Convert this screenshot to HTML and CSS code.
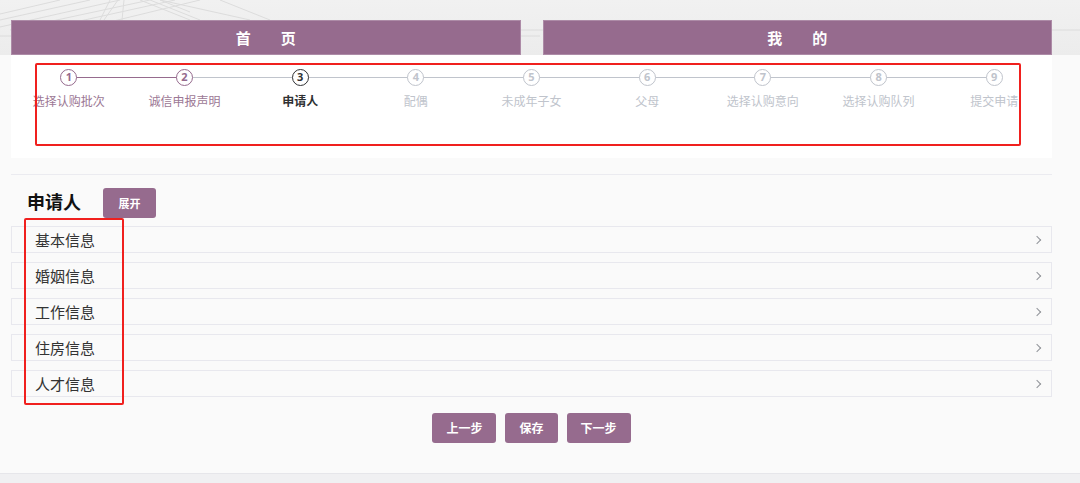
FILE: index.html
```html
<!DOCTYPE html>
<html lang="zh">
<head>
<meta charset="utf-8">
<link rel="stylesheet" href="styles.css">
</head>
<body>
<div class="page">
  <header class="hero">
    <svg class="hero-art" width="1080" height="55" viewBox="0 0 1080 55" aria-hidden="true">
      <g stroke="#dcdcdc" stroke-width="1" fill="none">
        <line x1="0" y1="14" x2="60" y2="0"/>
        <line x1="0" y1="20" x2="90" y2="0"/>
        <line x1="0" y1="27" x2="120" y2="0"/>
        <line x1="10" y1="30" x2="150" y2="0"/>
        <line x1="30" y1="32" x2="175" y2="0"/>
        <line x1="60" y1="34" x2="200" y2="0"/>
        <line x1="100" y1="20" x2="110" y2="0"/>
        <line x1="104" y1="20" x2="118" y2="0"/>
        <line x1="122" y1="20" x2="124" y2="0"/>
        <line x1="140" y1="0" x2="190" y2="20"/>
        <line x1="150" y1="0" x2="200" y2="20"/>
        <line x1="160" y1="0" x2="190" y2="12"/>
        <line x1="0" y1="36" x2="540" y2="36"/>
        <line x1="160" y1="0" x2="250" y2="20"/>
        <line x1="220" y1="0" x2="270" y2="20"/>
        <line x1="500" y1="30" x2="1080" y2="30"/>
      </g>
    </svg>
    <nav class="nav">
      <a class="nav-bar">首　　页</a>
      <a class="nav-bar">我　　的</a>
    </nav>
  </header>

  <div class="wrap">
    <div class="steps">
      <div class="step done"><div class="step-head"><span class="step-icon">1</span></div><div class="step-title">选择认购批次</div></div>
      <div class="step done"><div class="step-head"><span class="step-icon">2</span></div><div class="step-title">诚信申报声明</div></div>
      <div class="step current"><div class="step-head"><span class="step-icon">3</span></div><div class="step-title">申请人</div></div>
      <div class="step"><div class="step-head"><span class="step-icon">4</span></div><div class="step-title">配偶</div></div>
      <div class="step"><div class="step-head"><span class="step-icon">5</span></div><div class="step-title">未成年子女</div></div>
      <div class="step"><div class="step-head"><span class="step-icon">6</span></div><div class="step-title">父母</div></div>
      <div class="step"><div class="step-head"><span class="step-icon">7</span></div><div class="step-title">选择认购意向</div></div>
      <div class="step"><div class="step-head"><span class="step-icon">8</span></div><div class="step-title">选择认购队列</div></div>
      <div class="step last"><div class="step-head"><span class="step-icon">9</span></div><div class="step-title">提交申请</div></div>
      <div class="mark mark-steps"></div>
    </div>

    <div class="divider"></div>

    <section class="applicant">
      <div class="title-row">
        <h2 class="title">申请人</h2>
        <button class="btn btn-small">展开</button>
      </div>
      <div class="rows">
        <div class="row"><span>基本信息</span><i class="chev"></i></div>
        <div class="row"><span>婚姻信息</span><i class="chev"></i></div>
        <div class="row"><span>工作信息</span><i class="chev"></i></div>
        <div class="row"><span>住房信息</span><i class="chev"></i></div>
        <div class="row"><span>人才信息</span><i class="chev"></i></div>
        <div class="mark mark-rows"></div>
      </div>
      <div class="actions">
        <button class="btn">上一步</button>
        <button class="btn">保存</button>
        <button class="btn">下一步</button>
      </div>
    </section>
  </div>
  <footer class="foot"></footer>
</div>
</body>
</html>
```

FILE: styles.css
```css
* { box-sizing: border-box; }
html, body { margin: 0; padding: 0; }
body {
  background: #fafafa;
  font-family: "Noto Sans CJK SC", "Noto Sans", sans-serif;
  color: #303133;
  width: 1080px;
  height: 483px;
  overflow: hidden;
}
.page { position: relative; }

.hero {
  position: relative;
  height: 55px;
  background: linear-gradient(180deg, #f1f1f1 0%, #ececec 100%);
  padding: 20px 28px 0 11px;
}
.hero-art { position: absolute; left: 0; top: 0; }
.nav {
  position: relative;
  display: flex;
  gap: 22px;
  height: 35px;
}
.nav-bar {
  flex: 1;
  display: flex;
  align-items: center;
  justify-content: center;
  background: #966b8e;
  border: 1px solid #ad8ba7;
  color: #fff;
  font-weight: 700;
  font-size: 15px;
}

.wrap { margin-left: 11px; width: 1041px; }

.steps {
  position: relative;
  display: flex;
  background: #fff;
  height: 103px;
  padding-top: 14px;
}
.step { flex: 1; display: flex; flex-direction: column; align-items: center; }
.step-head {
  position: relative;
  width: 100%;
  display: flex;
  justify-content: center;
  height: 17px;
}
.step-head::after {
  content: "";
  position: absolute;
  left: 50%;
  width: 100%;
  top: 8px;
  height: 1px;
  background: #c0c4cc;
}
.step.done:first-child .step-head::after { background: #966b8e; }
.step.last .step-head::after { display: none; }
.step-icon {
  position: relative;
  z-index: 1;
  width: 17px;
  height: 17px;
  border-radius: 50%;
  border: 1.5px solid #c0c4cc;
  background: #fff;
  color: #c0c4cc;
  font-family: "Noto Sans", sans-serif;
  font-weight: 700;
  font-size: 11px;
  line-height: 14px;
  text-align: center;
}
.step.done .step-icon { border-color: #966b8e; color: #966b8e; }
.step.current .step-icon { border-color: #303133; color: #303133; }
.step-title {
  margin-top: 6px;
  font-size: 12px;
  line-height: 17px;
  color: #c0c4cc;
  white-space: nowrap;
}
.step.done .step-title { color: #9c7895; }
.step.current .step-title { color: #303133; font-weight: 700; }

.mark {
  position: absolute;
  border: 2px solid #f0201e;
  border-radius: 2px;
  pointer-events: none;
}
.mark-steps { left: 24px; top: 8px; width: 986px; height: 83px; }
.mark-rows { left: 13px; top: -8px; width: 100px; height: 187px; }

.divider { margin-top: 16px; height: 1px; background: #ebebf0; }

.applicant { padding-top: 13px; }
.title-row { display: flex; align-items: flex-start; gap: 22px; padding-left: 16px; }
.title { margin: 0; font-size: 18px; font-weight: 700; color: #111; line-height: 26px; }
.btn {
  border: none;
  border-radius: 3px;
  background: #966b8e;
  color: #fff;
  font-family: "Noto Sans CJK SC", sans-serif;
  font-weight: 700;
  font-size: 12px;
  height: 30px;
  padding: 0 14px;
  line-height: 30px;
}
.btn-small { width: 53px; padding: 0; font-size: 11px; }

.rows {
  position: relative;
  display: flex;
  flex-direction: column;
  gap: 9px;
  margin-top: 8px;
}
.row {
  height: 27px;
  border: 1px solid #e8e8ee;
  background: #fafafa;
  display: flex;
  align-items: center;
  justify-content: space-between;
  padding: 0 9px 0 23px;
  font-size: 15px;
  color: #333;
}
.chev {
  width: 6px; height: 6px;
  border-right: 1px solid #909399;
  border-top: 1px solid #909399;
  transform: rotate(45deg);
  margin-right: 2px;
}

.actions {
  display: flex;
  justify-content: center;
  gap: 9px;
  margin-top: 16px;
  height: 30px;
}

.foot {
  margin-top: 30px;
  height: 10px;
  border-top: 1px solid #e6e6ea;
  background: #f0f0f2;
}
```
